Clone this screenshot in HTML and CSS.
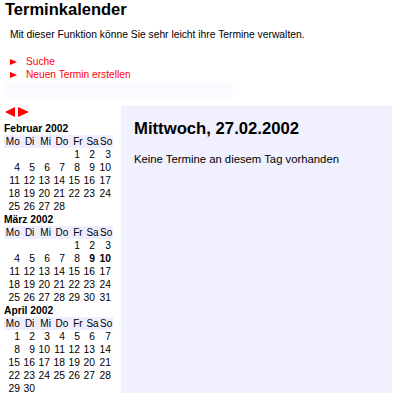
FILE: index.html
```html
<!DOCTYPE html>
<html lang="de">
<head>
<meta charset="utf-8">
<title>Terminkalender</title>
<link rel="stylesheet" href="styles.css">
</head>
<body>
<h1 class="title">Terminkalender</h1>
<p class="intro">Mit dieser Funktion könne Sie sehr leicht ihre Termine verwalten.</p>
<ul class="links">
  <li><span class="tri"></span><a href="#">Suche</a></li>
  <li><span class="tri"></span><a href="#">Neuen Termin erstellen</a></li>
</ul>
<div class="band"></div>
<div class="main">
  <div class="side">
    <div class="nav">
      <span class="arrow left"></span><span class="arrow right"></span>
    </div>
    <div class="month">
      <div class="mname">Februar 2002</div>
      <div class="head"><span>Mo</span><span>Di</span><span>Mi</span><span>Do</span><span>Fr</span><span>Sa</span><span>So</span></div>
      <div class="grid">
        <span></span><span></span><span></span><span></span><span>1</span><span>2</span><span>3</span>
        <span>4</span><span>5</span><span>6</span><span>7</span><span>8</span><span>9</span><span>10</span>
        <span>11</span><span>12</span><span>13</span><span>14</span><span>15</span><span>16</span><span>17</span>
        <span>18</span><span>19</span><span>20</span><span>21</span><span>22</span><span>23</span><span>24</span>
        <span>25</span><span>26</span><span>27</span><span>28</span>
      </div>
    </div>
    <div class="month">
      <div class="mname">März 2002</div>
      <div class="head"><span>Mo</span><span>Di</span><span>Mi</span><span>Do</span><span>Fr</span><span>Sa</span><span>So</span></div>
      <div class="grid">
        <span></span><span></span><span></span><span></span><span>1</span><span>2</span><span>3</span>
        <span>4</span><span>5</span><span>6</span><span>7</span><span>8</span><span class="b">9</span><span class="b">10</span>
        <span>11</span><span>12</span><span>13</span><span>14</span><span>15</span><span>16</span><span>17</span>
        <span>18</span><span>19</span><span>20</span><span>21</span><span>22</span><span>23</span><span>24</span>
        <span>25</span><span>26</span><span>27</span><span>28</span><span>29</span><span>30</span><span>31</span>
      </div>
    </div>
    <div class="month">
      <div class="mname">April 2002</div>
      <div class="head"><span>Mo</span><span>Di</span><span>Mi</span><span>Do</span><span>Fr</span><span>Sa</span><span>So</span></div>
      <div class="grid">
        <span>1</span><span>2</span><span>3</span><span>4</span><span>5</span><span>6</span><span>7</span>
        <span>8</span><span>9</span><span>10</span><span>11</span><span>12</span><span>13</span><span>14</span>
        <span>15</span><span>16</span><span>17</span><span>18</span><span>19</span><span>20</span><span>21</span>
        <span>22</span><span>23</span><span>24</span><span>25</span><span>26</span><span>27</span><span>28</span>
        <span>29</span><span>30</span>
      </div>
    </div>
  </div>
  <div class="panel">
    <h2 class="day">Mittwoch, 27.02.2002</h2>
    <p class="none">Keine Termine an diesem Tag vorhanden</p>
  </div>
</div>
</body>
</html>
```
FILE: styles.css
```css
html, body {
  margin: 0;
  padding: 0;
  background: #ffffff;
}
body {
  font-family: "Liberation Sans", Arial, sans-serif;
  font-size: 10.3px;
  color: #000000;
  padding: 0 4px 0 5px;
}
.title {
  font-size: 16.5px;
  font-weight: bold;
  margin: 0;
  padding-top: 1px;
  line-height: 17px;
}
.intro {
  margin: 10px 0 0 5px;
  line-height: 13px;
}
.links {
  list-style: none;
  margin: 14px 0 0 5px;
  padding: 0;
  font-size: 10.2px;
}
.links li {
  display: flex;
  align-items: center;
  height: 13px;
}
.tri {
  width: 0;
  height: 0;
  border-top: 3.5px solid transparent;
  border-bottom: 3.5px solid transparent;
  border-left: 7px solid #ff0000;
  margin-right: 9px;
}
.links a {
  color: #ff0000;
  text-decoration: none;
}
.band {
  width: 228px;
  height: 17px;
  margin-top: 1px;
  background: #fafaff;
}
.main {
  display: flex;
  margin-top: 7px;
  margin-left: -1px;
}
.side {
  width: 117px;
  flex: none;
}
.nav {
  display: flex;
  gap: 3px;
  height: 12px;
  align-items: center;
  margin: 0 0 4px 1px;
}
.arrow {
  width: 0;
  height: 0;
  border-top: 5px solid transparent;
  border-bottom: 5px solid transparent;
}
.arrow.left {
  border-right: 10px solid #ff0000;
}
.arrow.right {
  border-left: 11px solid #ff0000;
}
.mname {
  font-weight: bold;
  line-height: 13px;
  height: 13px;
}
.head {
  display: grid;
  grid-template-columns: 17.5px 16.25px 15.75px 16.75px 15.5px 13.5px 13.75px;
  justify-items: center;
  width: 109px;
  height: 13px;
  line-height: 13px;
  font-size: 10px;
  background: #eeeeff;
  white-space: nowrap;
}
.grid {
  display: grid;
  grid-template-columns: 16px 15px 15px 15px 15px 15px 16px;
  grid-auto-rows: 13px;
  line-height: 13px;
  width: 107px;
}
.grid span {
  text-align: right;
  white-space: nowrap;
}
.grid .b {
  font-weight: bold;
}
.panel {
  flex: 1;
  background: #f0f0ff;
  height: 287px;
  padding: 13px 13px;
  box-sizing: border-box;
}
.day {
  font-size: 16.7px;
  font-weight: bold;
  margin: 0;
  line-height: 20px;
}
.none {
  margin: 14px 0 0 0;
  line-height: 13px;
  font-size: 11.3px;
}
```
